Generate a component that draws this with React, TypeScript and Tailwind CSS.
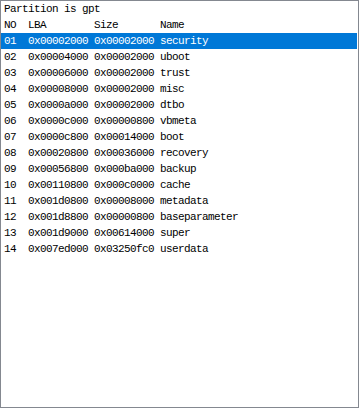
const partitions = [
  { no: '01', lba: '0x00002000', size: '0x00002000', name: 'security' },
  { no: '02', lba: '0x00004000', size: '0x00002000', name: 'uboot' },
  { no: '03', lba: '0x00006000', size: '0x00002000', name: 'trust' },
  { no: '04', lba: '0x00008000', size: '0x00002000', name: 'misc' },
  { no: '05', lba: '0x0000a000', size: '0x00002000', name: 'dtbo' },
  { no: '06', lba: '0x0000c000', size: '0x00000800', name: 'vbmeta' },
  { no: '07', lba: '0x0000c800', size: '0x00014000', name: 'boot' },
  { no: '08', lba: '0x00020800', size: '0x00036000', name: 'recovery' },
  { no: '09', lba: '0x00056800', size: '0x000ba000', name: 'backup' },
  { no: '10', lba: '0x00110800', size: '0x000c0000', name: 'cache' },
  { no: '11', lba: '0x001d0800', size: '0x00008000', name: 'metadata' },
  { no: '12', lba: '0x001d8800', size: '0x00000800', name: 'baseparameter' },
  { no: '13', lba: '0x001d9000', size: '0x00614000', name: 'super' },
  { no: '14', lba: '0x007ed000', size: '0x03250fc0', name: 'userdata' },
]

const rowCls = 'grid grid-cols-[24px_66px_66px_1fr] h-4 items-center pl-[3px] whitespace-pre'

export default function App() {
  return (
    <div className="h-[408px] w-[359px] border border-[#848890] bg-white font-['Liberation_Mono',monospace] text-[11px] leading-4 tracking-[-0.6px] text-black">
      <div className="h-4 pl-[3px] flex items-center">Partition is gpt</div>
      <div className={rowCls}>
        <span>NO</span>
        <span>LBA</span>
        <span>Size</span>
        <span>Name</span>
      </div>
      <div className="pr-[1px]">
        {partitions.map((p, i) => (
          <div key={p.no} className={`${rowCls} ${i === 0 ? 'bg-[#0078d7] text-white' : ''}`}>
            <span>{p.no}</span>
            <span>{p.lba}</span>
            <span>{p.size}</span>
            <span>{p.name}</span>
          </div>
        ))}
      </div>
    </div>
  )
}
